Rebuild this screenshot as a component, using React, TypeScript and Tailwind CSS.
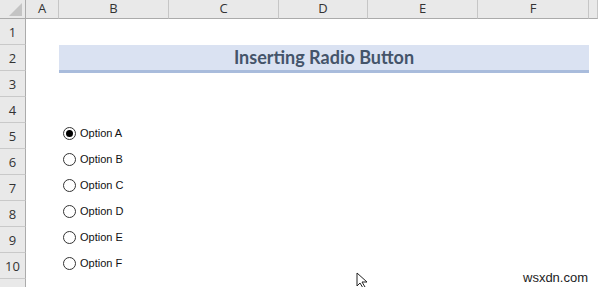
const cols = ["A", "B", "C", "D", "E", "F", ""];
const options = ["Option A", "Option B", "Option C", "Option D", "Option E", "Option F"];

function Radio({ label, checked }: { label: string; checked?: boolean }) {
  return (
    <div className="flex items-center gap-[4px] pl-[4px] -mt-[5px]">
      <span className="w-[13px] h-[13px] rounded-full border border-[#333] bg-white flex items-center justify-center">
        {checked && <span className="w-[7px] h-[7px] rounded-full bg-black" />}
      </span>
      <span className="text-[11px] text-[#111]" style={{ fontFamily: '"Liberation Sans", Arial, sans-serif' }}>
        {label}
      </span>
    </div>
  );
}

export default function App() {
  const rows = Array.from({ length: 11 }, (_, i) => i + 1);
  return (
    <div
      className="relative w-[598px] h-[287px] overflow-hidden bg-white"
      style={{ fontFamily: '"Open Sans", "Liberation Sans", sans-serif' }}
    >
      <div className="grid grid-cols-[26px_33px_110px_110px_89px_110px_111px_1fr] grid-rows-[19px_repeat(11,26px)]">
        {/* corner */}
        <div className="bg-[#e9e9e9] border-r border-b border-[#ababab] flex items-end justify-end pr-[3px] pb-[2px]">
          <svg width="13" height="13" viewBox="0 0 13 13">
            <polygon points="13,0 13,13 0,13" fill="#c4c4c4" />
          </svg>
        </div>
        {/* column headers */}
        {cols.map((c, i) => (
          <div
            key={i}
            className="bg-[#e9e9e9] border-r border-b border-r-[#c6c6c6] border-b-[#ababab] flex items-center justify-center text-[13px] text-[#333]"
          >
            {c}
          </div>
        ))}
        {rows.map((r) => (
          <div key={r} className="contents">
            <div className="bg-[#e9e9e9] border-r border-b border-r-[#ababab] border-b-[#c9c9c9] flex items-center justify-center text-[13px] text-[#333] pt-[2px]">
              {r <= 10 ? r : ""}
            </div>
            <div className="bg-white" />
            {r === 2 ? (
              <div className="col-span-5 relative z-10">
                <div className="h-[28px] bg-[#dae2f2] border-b-[3px] border-[#a9bcdc] flex items-center justify-center pb-[1px]">
                  <span
                    className="text-[18px] font-bold text-[#44546a]"
                    style={{ fontFamily: 'Lato, "Open Sans", sans-serif' }}
                  >
                    Inserting Radio Button
                  </span>
                </div>
              </div>
            ) : (
              <>
                <div className="bg-white flex items-center">
                  {r >= 5 && r <= 10 && <Radio label={options[r - 5]} checked={r === 5} />}
                </div>
                <div className="bg-white" />
                <div className="bg-white" />
                <div className="bg-white" />
                <div className="bg-white" />
              </>
            )}
            <div className="bg-white" />
          </div>
        ))}
      </div>

      {/* mouse cursor */}
      <svg className="absolute left-[356px] top-[272px]" width="14" height="16" viewBox="0 0 14 16">
        <path d="M1 1 L1 14 L4 11 L7 16 L9 15 L6 10 L11 10 Z" fill="white" stroke="#222" strokeWidth="1" />
      </svg>

      {/* watermark */}
      <div
        className="absolute left-[523px] top-[268px] text-[13px] text-[#222]"
        style={{ fontFamily: '"Liberation Sans", Arial, sans-serif' }}
      >
        wsxdn.com
      </div>
    </div>
  );
}
